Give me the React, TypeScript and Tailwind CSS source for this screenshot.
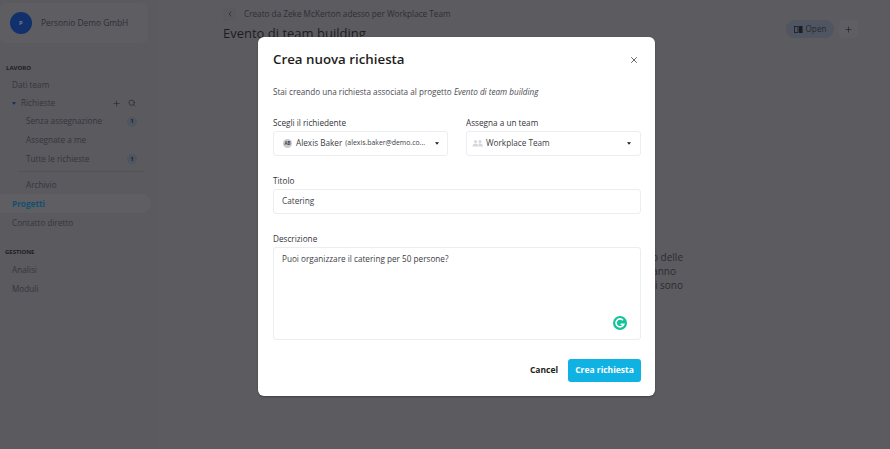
import { Plus, Search, ChevronLeft, X } from 'lucide-react'

const Caret = ({ className = '' }: { className?: string }) => (
  <svg width="4" height="3" viewBox="0 0 5 3" className={className}>
    <path d="M0 0h5L2.5 3z" fill="currentColor" />
  </svg>
)

const NavItem = ({ label, badge, indent }: { label: string; badge?: string; indent?: boolean }) => (
  <div className={`flex h-[18.7px] items-center justify-between text-[8.2px] text-[#36363c] ${indent ? 'pl-[26px]' : 'pl-[12px]'} pr-[21px]`}>
    <span>{label}</span>
    {badge && (
      <span className="flex h-[10px] w-[10px] items-center justify-center rounded-full bg-[#4f5561] text-[5.5px] font-bold text-[#1d1d20]">
        {badge}
      </span>
    )}
  </div>
)

const Sidebar = () => (
  <div className="flex w-[158px] shrink-0 flex-col bg-[#5a5a5f] pt-[3px]">
    <div className="flex h-[40px] w-[148px] items-center gap-[9px] rounded-[6px] bg-[#5d5d62] pl-[10px]">
      <div className="flex h-[22px] w-[22px] items-center justify-center rounded-full bg-[#12306c] text-[6px] font-bold text-[#77798a]">P</div>
      <span className="text-[8.35px] text-[#2f2f35]">Personio Demo GmbH</span>
    </div>
    <div className="mt-[20px] pl-[6px] text-[6px] font-bold leading-[10px] text-[#1d1d20]">LAVORO</div>
    <div className="mt-[2.5px] flex flex-col">
      <NavItem label="Dati team" />
      <div className="flex h-[18px] items-center pl-[12px] pr-[22px] text-[8.2px] text-[#36363c]">
        <Caret className="mr-[5px] text-[#10295f]" />
        <span className="flex-1">Richieste</span>
        <Plus size={9} strokeWidth={1.6} className="mr-[7px] text-[#26262a]" />
        <Search size={8} strokeWidth={2} className="text-[#26262a]" />
      </div>
      <NavItem label="Senza assegnazione" badge="1" indent />
      <NavItem label="Assegnate a me" indent />
      <NavItem label="Tutte le richieste" badge="1" indent />
      <div className="ml-[18px] mr-[13px] mt-[3px] h-px bg-[#525257]" />
      <div className="mt-[3.5px]"><NavItem label="Archivio" indent /></div>
      <div className="flex h-[19px] w-[151px] items-center rounded-r-[9px] bg-[#5e5e63] pl-[12px] text-[8.2px] font-bold text-[#14506e]">Progetti</div>
      <NavItem label="Contatto diretto" />
    </div>
    <div className="mt-[15px] pl-[5px] text-[6px] font-bold leading-[10px] text-[#1d1d20]">GESTIONE</div>
    <div className="mt-[4px] flex flex-col">
      <NavItem label="Analisi" />
      <NavItem label="Moduli" />
    </div>
  </div>
)

const Main = () => (
  <div className="min-w-0 flex-1 pl-[65px] pr-[32px]">
    <div className="flex items-start justify-between">
      <div>
        <div className="flex h-[28px] items-center">
          <div className="flex h-[13px] w-[13px] items-center justify-center rounded-[3px] bg-[#59595e]">
            <ChevronLeft size={8} strokeWidth={2.2} className="text-[#26262a]" />
          </div>
          <span className="ml-[8px] text-[8.2px] text-[#2f2f35]">Creato da Zeke McKerton adesso per Workplace Team</span>
        </div>
        <div className="-mt-[5px] text-[13px] leading-[20px] text-[#1d1d20]">Evento di team building</div>
      </div>
      <div className="mt-[20px] flex items-center gap-[5px]">
        <div className="flex h-[18px] w-[48px] items-center justify-center gap-[3px] rounded-full bg-[#4f5561] text-[8.2px] text-[#2b2b30]">
          <svg width="9" height="7" viewBox="0 0 9 7">
            <rect x="0.5" y="0.5" width="3.5" height="6" fill="none" stroke="#1d1d20" strokeWidth="0.8" />
            <rect x="5" y="0" width="3.5" height="7" fill="#1d1d20" />
          </svg>
          Open
        </div>
        <div className="flex h-[18px] w-[19px] items-center justify-center rounded-[3px] bg-[#5e5e63]">
          <Plus size={9} strokeWidth={1.6} className="text-[#1d1d20]" />
        </div>
      </div>
    </div>
    <div className="ml-[390px] mt-[207px] w-[70px] whitespace-nowrap text-right text-[10px] leading-[14px] text-[#2b2b30]">
      <div>o delle</div>
      <div className="pr-[7px]">anno</div>
      <div>ui sono</div>
    </div>
  </div>
)

const Field = ({ label, children, className = '' }: { label: string; children: React.ReactNode; className?: string }) => (
  <div className={className}>
    <div className="mb-[1px] text-[8.2px] leading-[14px] text-[#34343a]">{label}</div>
    {children}
  </div>
)

const boxClass = 'flex h-[25px] items-center whitespace-nowrap rounded-[3px] border border-[#ecedf0] bg-white text-[8.2px] text-[#3d3d45]'

const Modal = () => (
  <div className="absolute left-[258px] top-[37px] flex h-[359px] w-[397px] flex-col rounded-[6px] bg-white pl-[15px] pr-[14px] pt-[12.5px] shadow-[0_1px_2px_rgba(0,0,0,0.3)]">
    <div className="flex h-[20px] items-center justify-between">
      <h2 className="text-[13.3px] font-semibold text-[#1d1d20]">Crea nuova richiesta</h2>
      <X size={10} strokeWidth={1.7} className="mr-[2px] text-[#26262a]" />
    </div>
    <p className="mt-[15.5px] text-[8.15px] leading-[13px] text-[#4b4b52]">
      Stai creando una richiesta associata al progetto <em>Evento di team building</em>
    </p>
    <div className="mt-[18px] flex gap-[18px]">
      <Field label="Scegli il richiedente" className="w-[175px]">
        <div className={`${boxClass} pl-[9px]`}>
          <span className="mr-[4px] flex h-[9px] w-[9px] items-center justify-center rounded-full bg-[#c9cad0] text-[4.5px] font-bold text-[#3d3d45]">AB</span>
          <span>Alexis Baker</span>
          <span className="ml-[3px] text-[6.9px]">(alexis.baker@demo.co...</span>
          <Caret className="ml-auto mr-[8px] text-[#1d1d20]" />
        </div>
      </Field>
      <Field label="Assegna a un team" className="w-[175px]">
        <div className={`${boxClass} pl-[5px]`}>
          <svg width="11" height="7" viewBox="0 0 11 7" className="mr-[3px] text-[#d5d6df]">
            <circle cx="3.5" cy="1.6" r="1.5" fill="currentColor" />
            <circle cx="8" cy="1.6" r="1.5" fill="currentColor" />
            <path d="M0.5 6.5c0-2 1.3-3 3-3s3 1 3 3zM7 6.5c0-1.2-.3-2-.8-2.7.5-.2 1.1-.3 1.8-.3 1.7 0 3 1 3 3z" fill="currentColor" />
          </svg>
          <span>Workplace Team</span>
          <Caret className="ml-auto mr-[9px] text-[#1d1d20]" />
        </div>
      </Field>
    </div>
    <Field label="Titolo" className="mt-[18px]">
      <div className={`${boxClass} pl-[8px]`}>Catering</div>
    </Field>
    <Field label="Descrizione" className="mt-[18px]">
      <div className="relative h-[93px] rounded-[3px] border border-[#ecedf0] px-[8px] pt-[3px] text-[8.2px] leading-[15px] text-[#3d3d45]">
        Puoi organizzare il catering per 50 persone?
        <svg width="14" height="14" viewBox="0 0 14 14" className="absolute bottom-[9px] right-[13px]">
          <circle cx="7" cy="7" r="7" fill="#15c39a" />
          <path d="M10 4.2A4 4 0 1 0 10.8 8.2H7.6" fill="none" stroke="#fff" strokeWidth="1.6" />
        </svg>
      </div>
    </Field>
    <div className="mt-[19px] flex items-center justify-end">
      <span className="mr-[10px] text-[8.5px] font-bold text-[#1d1d20]">Cancel</span>
      <button className="h-[23px] w-[73px] rounded-[3px] bg-[#0fb2e2] text-[8.5px] font-bold text-white">Crea richiesta</button>
    </div>
  </div>
)

export default function App() {
  return (
    <div className="relative flex h-[449px] w-[890px] overflow-hidden bg-[#5c5b60] font-['Open_Sans',sans-serif]">
      <Sidebar />
      <Main />
      <Modal />
    </div>
  )
}
